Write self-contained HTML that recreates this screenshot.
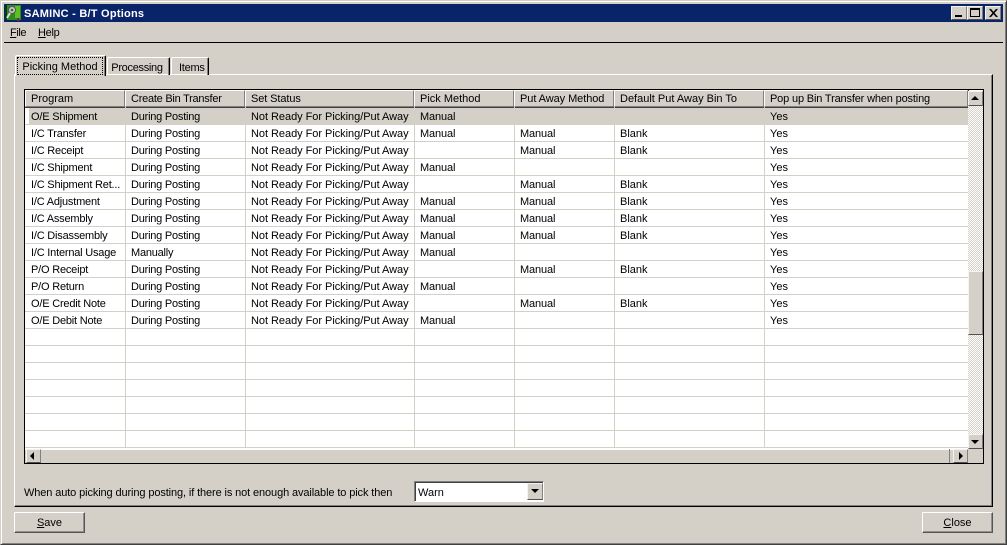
<!DOCTYPE html>
<html><head><meta charset="utf-8"><style>
html,body{margin:0;padding:0}
body{width:1007px;height:545px;overflow:hidden;background:#d4d0c8;position:relative;font:11px "Liberation Sans",sans-serif;color:#000}
div{position:absolute;box-sizing:border-box;white-space:nowrap}
u{text-decoration:underline}
.btn{background:#d4d0c8;border:1px solid;border-color:#fff #555 #555 #fff;box-shadow:inset -1px -1px 0 #909090}
.sb{background:#d4d0c8;border:1px solid;border-color:#f4f3f0 #808080 #505050 #f4f3f0}
.h{top:90px;height:17px;background:#d4d0c8;border-left:1px solid #fff;border-top:1px solid #fff;border-right:1px solid #808080;border-bottom:1px solid #808080;box-shadow:1px 0 0 #404040,0 1px 0 #404040;padding-left:5px;line-height:17px}
.hl{left:25px;width:943px;height:1px;background:#d4d0c8}
.vl{top:107px;width:1px;height:342px;background:#d4d0c8}
.t{height:17px;line-height:20px}
.t[style*="left:31px"]{letter-spacing:-.2px}
.t[style*="left:131px"]{letter-spacing:-.22px}
.t[style*="left:251px"]{letter-spacing:-.04px}
.t[style*="left:420px"],.t[style*="left:520px"]{letter-spacing:-.12px}
.hatch{background-color:#fff;background-image:conic-gradient(#d4d0c8 25%,#fff 0 50%,#d4d0c8 0 75%,#fff 0);background-size:2px 2px}
</style></head><body>
<div style="left:0;top:0;width:1007px;height:545px;border:1px solid;border-color:#d4d0c8 #404040 #404040 #d4d0c8;box-shadow:inset 1px 1px 0 #fff,inset -1px -1px 0 #808080"></div>

<div style="left:4px;top:4px;width:999px;height:18px;background:#0a246a"></div>
<svg style="position:absolute;left:5px;top:5px" width="17" height="16" viewBox="0 0 17 16"><rect x="1" y="0" width="15" height="15" fill="#2e8b1e"/><rect x="10" y="1" width="5" height="12" fill="#5fc01f"/><rect x="0" y="0" width="2" height="15" fill="#0b3a10"/><circle cx="7" cy="5" r="3.5" fill="#c9c9c9" stroke="#555"/><circle cx="7" cy="5" r="1.3" fill="#3a6a2a"/><path d="M5 8L2 13" stroke="#ddd" stroke-width="2"/><rect x="12" y="13" width="2" height="3" fill="#802060"/></svg>
<div style="left:24px;top:6px;height:16px;line-height:16px;color:#fff;font-weight:bold;font-size:11px;letter-spacing:.24px">SAMINC - B/T Options</div>
<div class="sb" style="left:951px;top:6px;width:16px;height:14px"><div style="left:3px;top:8px;width:7px;height:2px;background:#000"></div></div>
<div class="sb" style="left:967px;top:6px;width:16px;height:14px"><div style="left:2px;top:1px;width:10px;height:9px;border:1px solid #000;border-top-width:2px"></div></div>
<div class="sb" style="left:985px;top:6px;width:16px;height:14px"><svg style="position:absolute;left:2px;top:1px" width="11" height="10"><path d="M1.5 1L8.5 9M2.5 1L9.5 9M8.5 1L1.5 9M9.5 1L2.5 9" stroke="#000" stroke-width=".9"/></svg></div>

<div style="left:10px;top:25px;height:16px;line-height:16px;letter-spacing:-.4px"><u>F</u>ile</div>
<div style="left:38px;top:25px;height:16px;line-height:16px;letter-spacing:-.3px"><u>H</u>elp</div>
<div style="left:4px;top:42px;width:999px;height:1px;background:#000"></div>

<!-- panel -->
<div style="left:14px;top:74px;width:979px;height:433px;border-left:1px solid #fff;border-top:1px solid #fff;border-right:1px solid #000;border-bottom:1px solid #000;box-shadow:inset -1px -1px 0 #808080"></div>
<!-- tabs -->
<div style="left:15px;top:55px;width:91px;height:21px;background:#d4d0c8;border-left:1px solid #fff;border-top:1px solid #fff;border-right:1px solid #000;border-radius:2px 2px 0 0;box-shadow:inset -1px 0 0 #808080"><div style="left:1px;top:1px;width:86px;height:18px;border:1px dotted #000;text-align:center;line-height:19px;font-size:11px">Picking Method</div></div>
<div style="left:107px;top:57px;width:63px;height:18px;border-left:1px solid #fff;border-top:1px solid #fff;border-right:1px solid #000;border-radius:2px 2px 0 0;box-shadow:inset -1px 0 0 #808080;text-align:center;line-height:20px;letter-spacing:-.3px;padding-right:3px">Processing</div>
<div style="left:171px;top:57px;width:38px;height:18px;border-left:1px solid #fff;border-top:1px solid #fff;border-right:1px solid #000;border-radius:2px 2px 0 0;box-shadow:inset -1px 0 0 #808080;line-height:20px;padding-left:7px;letter-spacing:-.25px">Items</div>

<!-- grid -->
<div style="left:24px;top:89px;width:960px;height:375px;background:#fff;border:1px solid #000"></div>
<div style="left:25px;top:107px;width:943px;height:17px;background:#d4d0c8"></div>
<div style="left:25px;top:107px;width:4px;height:17px;background:#fff"></div>
<div class="h" style="left:25px;width:100px">Program</div>
<div class="h" style="left:125px;width:120px;letter-spacing:-.25px">Create Bin Transfer</div>
<div class="h" style="left:245px;width:169px;letter-spacing:-.1px">Set Status</div>
<div class="h" style="left:414px;width:100px">Pick Method</div>
<div class="h" style="left:514px;width:100px;letter-spacing:-.07px">Put Away Method</div>
<div class="h" style="left:614px;width:150px">Default Put Away Bin To</div>
<div class="h" style="left:764px;width:204px;letter-spacing:-.16px">Pop up Bin Transfer when posting</div>

<div class="vl" style="left:125px"></div><div class="vl" style="left:245px"></div><div class="vl" style="left:414px"></div><div class="vl" style="left:514px"></div><div class="vl" style="left:614px"></div><div class="vl" style="left:764px"></div>
<div class="hl" style="top:124px"></div><div class="hl" style="top:141px"></div><div class="hl" style="top:158px"></div><div class="hl" style="top:175px"></div><div class="hl" style="top:192px"></div><div class="hl" style="top:209px"></div><div class="hl" style="top:226px"></div><div class="hl" style="top:243px"></div><div class="hl" style="top:260px"></div><div class="hl" style="top:277px"></div><div class="hl" style="top:294px"></div><div class="hl" style="top:311px"></div><div class="hl" style="top:328px"></div><div class="hl" style="top:345px"></div><div class="hl" style="top:362px"></div><div class="hl" style="top:379px"></div><div class="hl" style="top:396px"></div><div class="hl" style="top:413px"></div><div class="hl" style="top:430px"></div><div class="hl" style="top:447px"></div>

<div class="t" style="left:31px;top:107px">O/E Shipment</div><div class="t" style="left:131px;top:107px">During Posting</div><div class="t" style="left:251px;top:107px">Not Ready For Picking/Put Away</div><div class="t" style="left:420px;top:107px">Manual</div><div class="t" style="left:770px;top:107px">Yes</div>
<div class="t" style="left:31px;top:124px">I/C Transfer</div><div class="t" style="left:131px;top:124px">During Posting</div><div class="t" style="left:251px;top:124px">Not Ready For Picking/Put Away</div><div class="t" style="left:420px;top:124px">Manual</div><div class="t" style="left:520px;top:124px">Manual</div><div class="t" style="left:620px;top:124px">Blank</div><div class="t" style="left:770px;top:124px">Yes</div>
<div class="t" style="left:31px;top:141px">I/C Receipt</div><div class="t" style="left:131px;top:141px">During Posting</div><div class="t" style="left:251px;top:141px">Not Ready For Picking/Put Away</div><div class="t" style="left:520px;top:141px">Manual</div><div class="t" style="left:620px;top:141px">Blank</div><div class="t" style="left:770px;top:141px">Yes</div>
<div class="t" style="left:31px;top:158px">I/C Shipment</div><div class="t" style="left:131px;top:158px">During Posting</div><div class="t" style="left:251px;top:158px">Not Ready For Picking/Put Away</div><div class="t" style="left:420px;top:158px">Manual</div><div class="t" style="left:770px;top:158px">Yes</div>
<div class="t" style="left:31px;top:175px">I/C Shipment Ret...</div><div class="t" style="left:131px;top:175px">During Posting</div><div class="t" style="left:251px;top:175px">Not Ready For Picking/Put Away</div><div class="t" style="left:520px;top:175px">Manual</div><div class="t" style="left:620px;top:175px">Blank</div><div class="t" style="left:770px;top:175px">Yes</div>
<div class="t" style="left:31px;top:192px">I/C Adjustment</div><div class="t" style="left:131px;top:192px">During Posting</div><div class="t" style="left:251px;top:192px">Not Ready For Picking/Put Away</div><div class="t" style="left:420px;top:192px">Manual</div><div class="t" style="left:520px;top:192px">Manual</div><div class="t" style="left:620px;top:192px">Blank</div><div class="t" style="left:770px;top:192px">Yes</div>
<div class="t" style="left:31px;top:209px">I/C Assembly</div><div class="t" style="left:131px;top:209px">During Posting</div><div class="t" style="left:251px;top:209px">Not Ready For Picking/Put Away</div><div class="t" style="left:420px;top:209px">Manual</div><div class="t" style="left:520px;top:209px">Manual</div><div class="t" style="left:620px;top:209px">Blank</div><div class="t" style="left:770px;top:209px">Yes</div>
<div class="t" style="left:31px;top:226px">I/C Disassembly</div><div class="t" style="left:131px;top:226px">During Posting</div><div class="t" style="left:251px;top:226px">Not Ready For Picking/Put Away</div><div class="t" style="left:420px;top:226px">Manual</div><div class="t" style="left:520px;top:226px">Manual</div><div class="t" style="left:620px;top:226px">Blank</div><div class="t" style="left:770px;top:226px">Yes</div>
<div class="t" style="left:31px;top:243px">I/C Internal Usage</div><div class="t" style="left:131px;top:243px">Manually</div><div class="t" style="left:251px;top:243px">Not Ready For Picking/Put Away</div><div class="t" style="left:420px;top:243px">Manual</div><div class="t" style="left:770px;top:243px">Yes</div>
<div class="t" style="left:31px;top:260px">P/O Receipt</div><div class="t" style="left:131px;top:260px">During Posting</div><div class="t" style="left:251px;top:260px">Not Ready For Picking/Put Away</div><div class="t" style="left:520px;top:260px">Manual</div><div class="t" style="left:620px;top:260px">Blank</div><div class="t" style="left:770px;top:260px">Yes</div>
<div class="t" style="left:31px;top:277px">P/O Return</div><div class="t" style="left:131px;top:277px">During Posting</div><div class="t" style="left:251px;top:277px">Not Ready For Picking/Put Away</div><div class="t" style="left:420px;top:277px">Manual</div><div class="t" style="left:770px;top:277px">Yes</div>
<div class="t" style="left:31px;top:294px">O/E Credit Note</div><div class="t" style="left:131px;top:294px">During Posting</div><div class="t" style="left:251px;top:294px">Not Ready For Picking/Put Away</div><div class="t" style="left:520px;top:294px">Manual</div><div class="t" style="left:620px;top:294px">Blank</div><div class="t" style="left:770px;top:294px">Yes</div>
<div class="t" style="left:31px;top:311px">O/E Debit Note</div><div class="t" style="left:131px;top:311px">During Posting</div><div class="t" style="left:251px;top:311px">Not Ready For Picking/Put Away</div><div class="t" style="left:420px;top:311px">Manual</div><div class="t" style="left:770px;top:311px">Yes</div>

<!-- v scrollbar -->
<div class="hatch" style="left:968px;top:106px;width:15px;height:328px"></div>
<div class="sb" style="left:968px;top:91px;width:15px;height:15px"><div style="left:2px;top:4px;width:0;height:0;border:4px solid transparent;border-top:0;border-bottom:4px solid #000"></div></div>
<div class="sb" style="left:968px;top:271px;width:15px;height:64px"></div>
<div class="sb" style="left:968px;top:434px;width:15px;height:15px"><div style="left:2px;top:5px;width:0;height:0;border:4px solid transparent;border-bottom:0;border-top:4px solid #000"></div></div>
<!-- h scrollbar -->
<div style="left:25px;top:448px;width:943px;height:2px;background:#fff"></div>
<div style="left:25px;top:450px;width:943px;height:13px;background:#d4d0c8"></div>
<div class="sb" style="left:26px;top:449px;width:15px;height:14px"><div style="left:3px;top:2px;width:0;height:0;border:4px solid transparent;border-left:0;border-right:4px solid #000"></div></div>
<div class="sb" style="left:953px;top:449px;width:15px;height:14px"><div style="left:5px;top:2px;width:0;height:0;border:4px solid transparent;border-right:0;border-left:4px solid #000"></div></div>
<div style="left:949px;top:449px;width:1px;height:14px;background:#808080"></div>
<div style="left:968px;top:449px;width:15px;height:14px;background:#d4d0c8"></div>

<!-- bottom -->
<div style="left:24px;top:485px;height:16px;line-height:16px;letter-spacing:-.115px">When auto picking during posting, if there is not enough available to pick then</div>
<div style="left:414px;top:481px;width:130px;height:21px;background:#fff;border:1px solid;border-color:#808080 #fff #fff #808080;box-shadow:inset 1px 1px 0 #404040"></div>
<div style="left:418px;top:485px;height:16px;line-height:16px">Warn</div>
<div class="sb" style="left:527px;top:483px;width:16px;height:17px"><div style="left:3px;top:5px;width:0;height:0;border:4px solid transparent;border-bottom:0;border-top:4px solid #000"></div></div>

<div class="btn" style="left:14px;top:512px;width:71px;height:21px;text-align:center;line-height:21px"><u>S</u>ave</div>
<div class="btn" style="left:922px;top:512px;width:71px;height:21px;text-align:center;line-height:21px"><u>C</u>lose</div>
</body></html>
